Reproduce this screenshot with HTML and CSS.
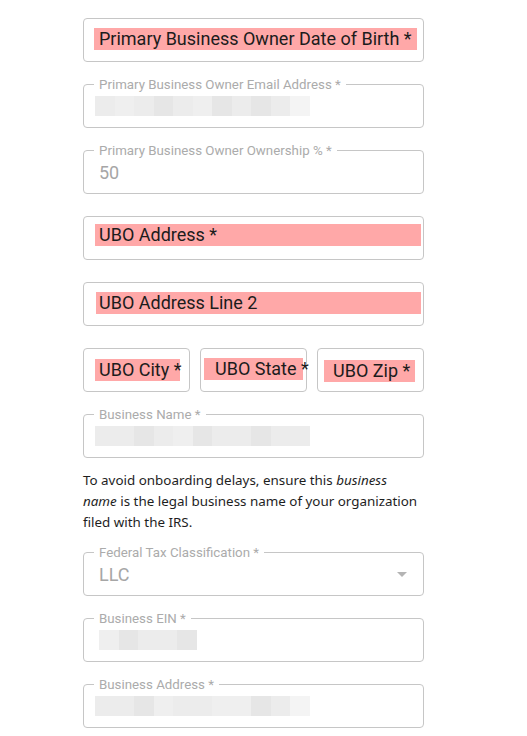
FILE: index.html
```html
<!DOCTYPE html>
<html lang="en">
<head>
    <meta charset="UTF-8">
    <meta name="viewport" content="width=device-width, initial-scale=1.0">
    <title>Business Owner</title>
    <link rel="stylesheet" href="styles.css">
</head>
<body>
    <div class="form">
        <div class="field">
            <span class="hl hl-dob">Primary Business Owner Date of Birth *</span>
        </div>

        <div class="field">
            <label>Primary Business Owner Email Address *</label>
            <div class="blur">
                <span class="m2"></span><span class="m3"></span><span class="m2"></span><span class="m1"></span><span class="m2"></span><span class="m3"></span><span class="m1"></span><span class="m2"></span><span class="m1"></span><span class="m2"></span><span class="m4"></span>
            </div>
        </div>

        <div class="field">
            <label>Primary Business Owner Ownership % *</label>
            <span class="value">50</span>
        </div>

        <div class="field">
            <span class="hl hl-addr">UBO Address *</span>
        </div>

        <div class="field">
            <span class="hl hl-addr2">UBO Address Line 2</span>
        </div>

        <div class="row">
            <div class="field">
                <span class="hl hl-city">UBO City *</span>
            </div>
            <div class="field">
                <span class="hl hl-state">UBO State *</span>
            </div>
            <div class="field">
                <span class="hl hl-zip">UBO Zip *</span>
            </div>
        </div>

        <div class="field tight">
            <label>Business Name *</label>
            <div class="blur">
                <span class="m2"></span><span class="m2"></span><span class="m1"></span><span class="m2"></span><span class="m3"></span><span class="m1"></span><span class="m2"></span><span class="m2"></span><span class="m1"></span><span class="m2"></span><span class="m2"></span>
            </div>
        </div>

        <p class="helper">To avoid onboarding delays, ensure this <em>business name</em> is the legal business name of your organization filed with the IRS.</p>

        <div class="field">
            <label>Federal Tax Classification *</label>
            <span class="value">LLC</span>
            <span class="arrow"></span>
        </div>

        <div class="field">
            <label>Business EIN *</label>
            <div class="blur blur-ein">
                <span class="m3"></span><span class="m1"></span><span class="m2"></span><span class="m2"></span><span class="m1"></span>
            </div>
        </div>

        <div class="field">
            <label>Business Address *</label>
            <div class="blur">
                <span class="m2"></span><span class="m2"></span><span class="m1"></span><span class="m3"></span><span class="m2"></span><span class="m2"></span><span class="m3"></span><span class="m3"></span><span class="m1"></span><span class="m2"></span><span class="m4"></span>
            </div>
        </div>
    </div>
</body>
</html>
```

FILE: styles.css
```css
body {
    margin: 0;
    background-color: #ffffff;
    font-family: 'Roboto', sans-serif;
}
.form {
    width: 341px;
    margin-left: 83px;
    padding-top: 18px;
}
.field {
    position: relative;
    display: flex;
    align-items: center;
    box-sizing: border-box;
    height: 44px;
    border: 1px solid #c6c6c6;
    border-radius: 4px;
    margin-bottom: 22px;
}
.field.tight {
    margin-bottom: 12px;
}
.field label {
    position: absolute;
    top: -8px;
    left: 10px;
    padding: 0 5px;
    background: white;
    font-size: 13.3px;
    line-height: 15px;
    color: #ababab;
}
.field .value {
    padding-left: 15px;
    font-size: 18px;
    color: #a6a6a6;
}
.field .arrow {
    margin-left: auto;
    margin-right: 16px;
    width: 0;
    height: 0;
    border-left: 5px solid transparent;
    border-right: 5px solid transparent;
    border-top: 5px solid #b4b4b4;
}

/* highlighted (missing) fields */
.hl {
    display: block;
    box-sizing: border-box;
    height: 22px;
    padding-left: 4px;
    background-color: #ffa8a8;
    color: #1c1c1c;
    font-size: 18px;
    line-height: 22px;
    white-space: nowrap;
}
.hl-dob {
    margin: -3px 6px 0 10px;
    padding-left: 5px;
    flex: 1;
}
.hl-addr {
    margin: -6px 2px 0 11px;
    flex: 1;
}
.hl-addr2 {
    margin: -2px 2px 0 12px;
    padding-left: 3px;
    flex: 1;
}

.row {
    display: flex;
    gap: 10px;
    margin-bottom: 22px;
}
.row .field {
    margin-bottom: 0;
    width: 107px;
}
.hl-city {
    margin: -1px 0 0 11px;
    width: 85px;
}
.hl-state {
    margin: -3px 0 0 3px;
    width: 99px;
    padding-left: 11px;
}
.hl-zip {
    margin: 1px 0 0 6px;
    width: 91px;
    padding-left: 9px;
}

/* pixelated placeholder values */
.blur {
    display: flex;
    margin-left: 11px;
    height: 20px;
}
.blur span {
    width: 19.5px;
    height: 100%;
}
.blur-ein {
    margin-left: 15px;
}
.m1 { background: #e6e6e6; }
.m2 { background: #ececec; }
.m3 { background: #efefef; }
.m4 { background: #f4f4f4; }

.helper {
    margin: 0 0 19px;
    font-family: 'Noto Sans', sans-serif;
    font-size: 13.4px;
    line-height: 21px;
    color: #1e1e1e;
}
```
